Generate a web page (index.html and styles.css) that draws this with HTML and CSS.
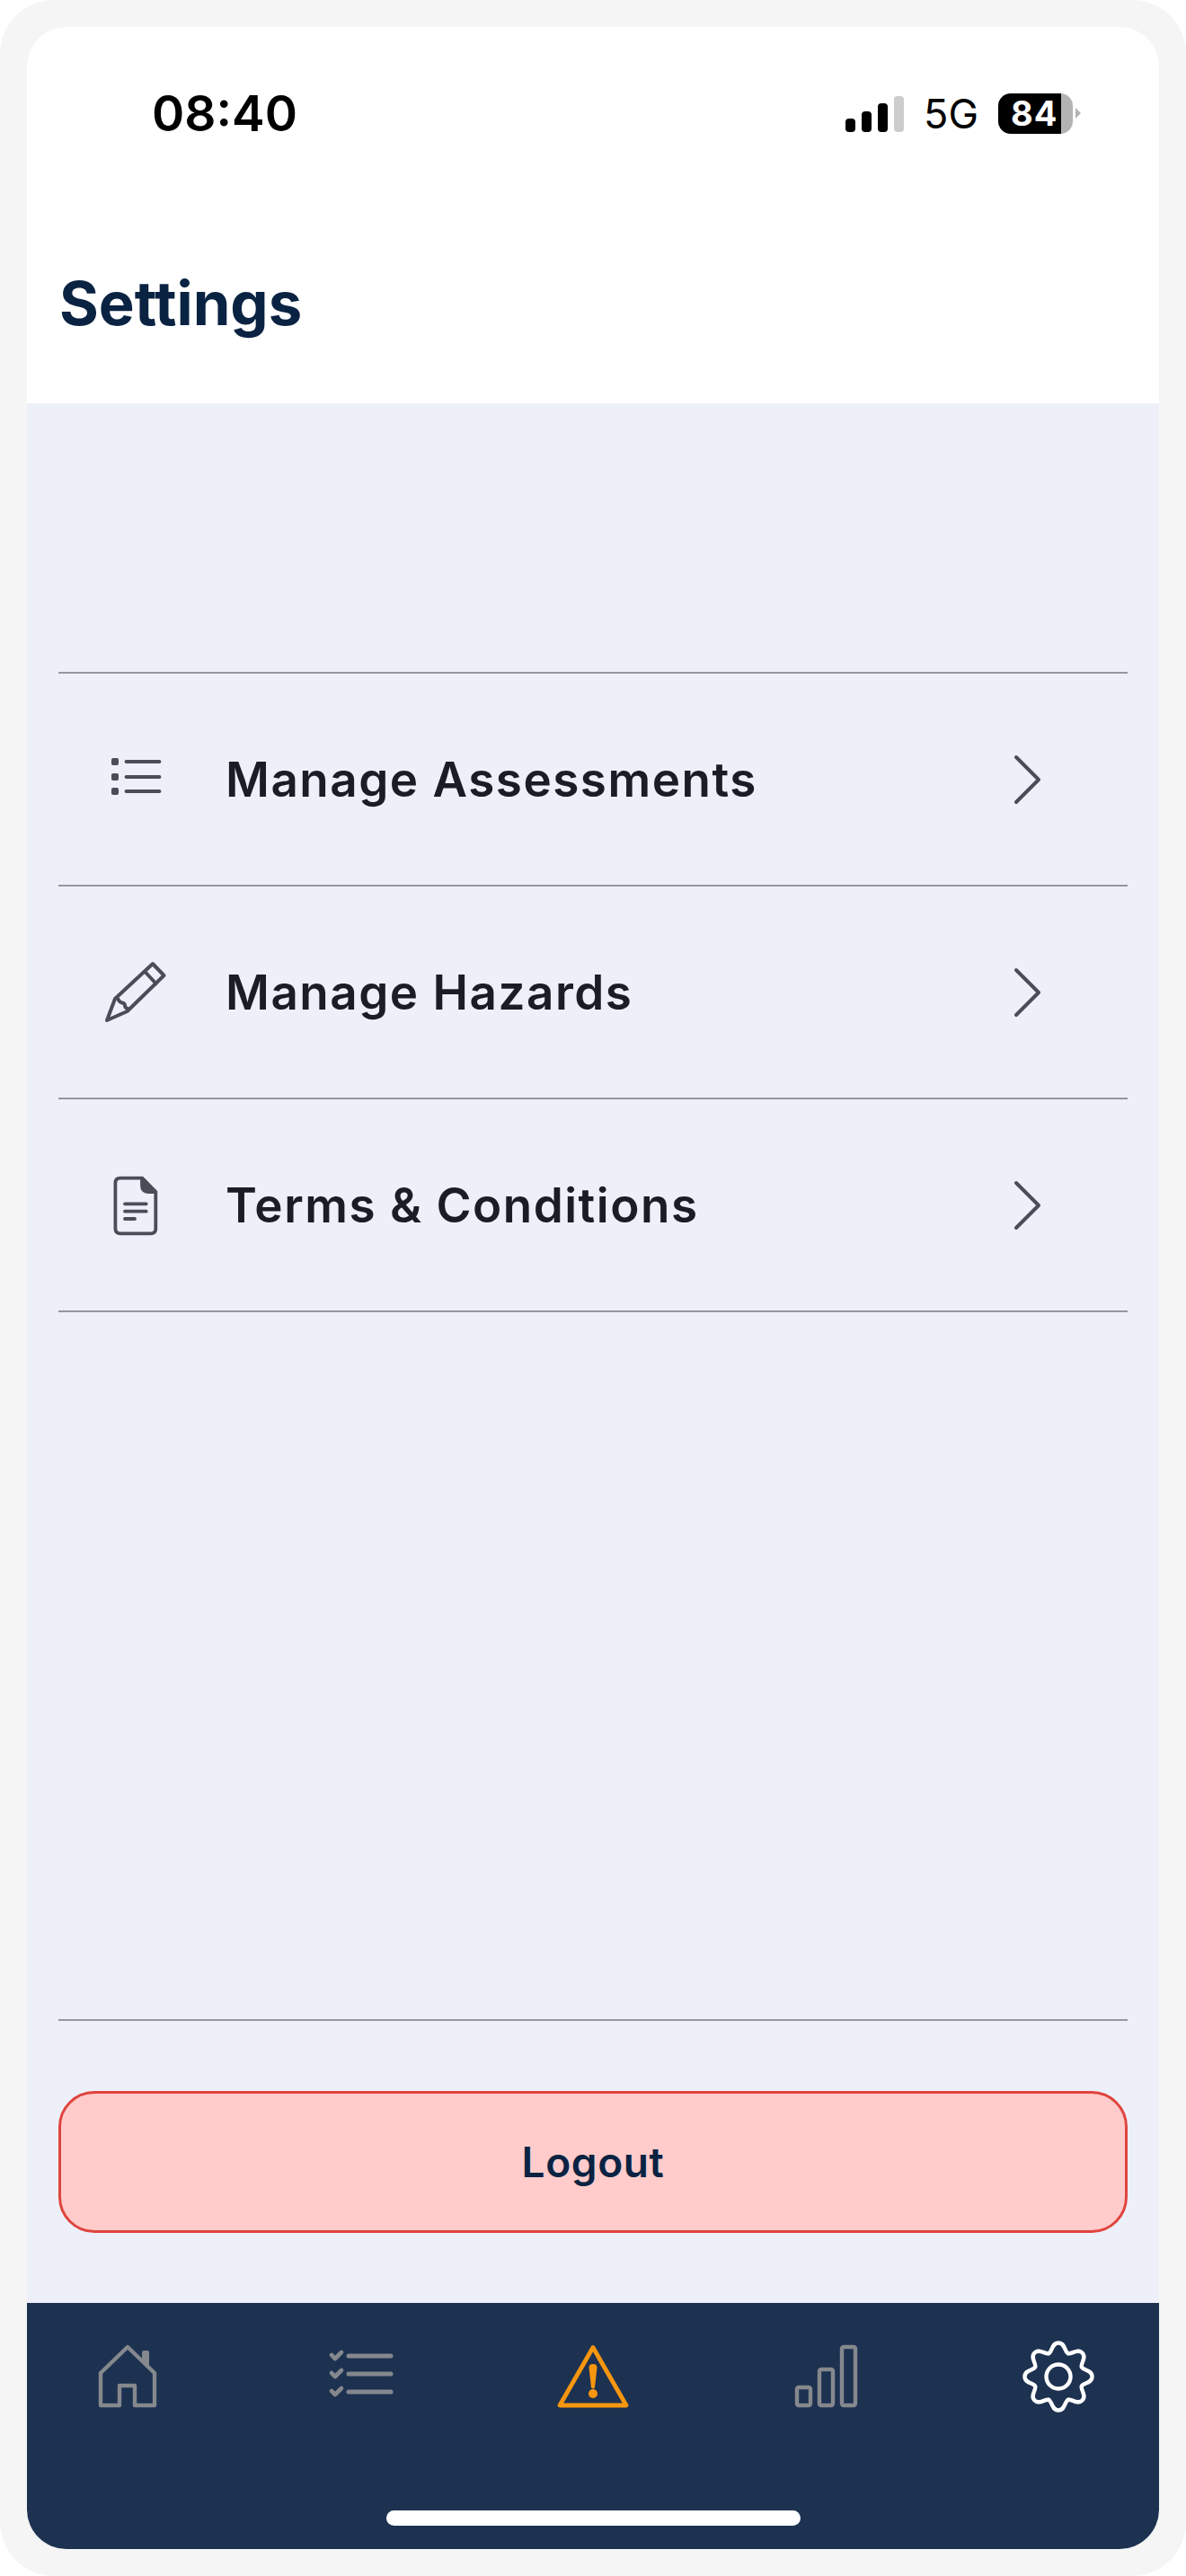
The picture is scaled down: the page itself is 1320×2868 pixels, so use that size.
FILE: index.html
```html
<!DOCTYPE html>
<html lang="en">
<head>
    <meta charset="UTF-8">
    <meta name="viewport" content="width=device-width, initial-scale=1.0">
    <title>Settings</title>
    <link rel="stylesheet" href="styles.css">
</head>
<body>
    <div class="frame">
    <div class="screen">

        <!-- Status bar and title -->
        <header class="top">
            <div class="status-bar">
                <span class="time">08:40</span>
                <div class="status-right">
                    <div class="signal">
                        <span class="bar bar-1"></span>
                        <span class="bar bar-2"></span>
                        <span class="bar bar-3"></span>
                        <span class="bar bar-4"></span>
                    </div>
                    <span class="network">5G</span>
                    <div class="battery"><span class="battery-level">84</span></div>
                    <span class="battery-nub"></span>
                </div>
            </div>
            <h1>Settings</h1>
        </header>

        <main class="content">
            <div class="menu">
                <a class="menu-row">
                    <svg class="row-icon" viewBox="0 0 80 80">
                        <rect x="12" y="16" width="8" height="8" rx="2" fill="#4a4d57"/>
                        <rect x="12" y="33" width="8" height="8" rx="2" fill="#4a4d57"/>
                        <rect x="12" y="49" width="8" height="8" rx="2" fill="#4a4d57"/>
                        <path d="M28.5 20H65.5M28.5 37H65.5M28.5 53H65.5" stroke="#4a4d57" stroke-width="3.8" stroke-linecap="round"/>
                    </svg>
                    <span class="row-label">Manage Assessments</span>
                    <svg class="chevron" viewBox="0 0 40 60"><path d="M9 5L34 30L9 55" fill="none" stroke="#4a4d57" stroke-width="4" stroke-linecap="round" stroke-linejoin="round"/></svg>
                </a>
                <a class="menu-row">
                    <svg class="row-icon" viewBox="0 0 80 80" fill="none" stroke="#4a4d57" stroke-width="4" stroke-linejoin="round" stroke-linecap="round">
                        <path d="M7 71L16 47L58 8L70.5 21L29.5 61Z"/>
                        <path d="M49.5 17L61.5 30"/>
                        <path d="M19.5 47.5Q21 51 24 51.5T27 54.5T30 58"/>
                    </svg>
                    <span class="row-label">Manage Hazards</span>
                    <svg class="chevron" viewBox="0 0 40 60"><path d="M9 5L34 30L9 55" fill="none" stroke="#4a4d57" stroke-width="4" stroke-linecap="round" stroke-linejoin="round"/></svg>
                </a>
                <a class="menu-row">
                    <svg class="row-icon" viewBox="0 0 80 80" fill="none" stroke="#4a4d57" stroke-width="3.8" stroke-linejoin="round" stroke-linecap="round">
                        <path d="M22 9.7H46L61.3 25V66Q61.3 71.3 56 71.3H22Q16.4 71.3 16.4 66V15Q16.4 9.7 22 9.7Z"/>
                        <path d="M46 9.7V18Q46 25 53 25H61.3Z" fill="#4a4d57"/>
                        <path d="M27 38.3H50.7M27 46.7H50.7M27 55H38"/>
                    </svg>
                    <span class="row-label">Terms &amp; Conditions</span>
                    <svg class="chevron" viewBox="0 0 40 60"><path d="M9 5L34 30L9 55" fill="none" stroke="#4a4d57" stroke-width="4" stroke-linecap="round" stroke-linejoin="round"/></svg>
                </a>
            </div>

            <div class="logout-area">
                <button class="logout-btn">Logout</button>
            </div>
        </main>

        <!-- Bottom tabs -->
        <footer class="tabbar">
            <nav class="tabs">
                <svg class="tab-icon" viewBox="0 0 80 80" fill="none" stroke="#85888d" stroke-width="4.4" stroke-linejoin="round">
                    <path d="M10 72V36L40 7L70 36V72H48V50H31V72Z"/>
                    <path d="M56 13Q56 11 58 11H62Q64 11 64 13V30L56 22Z" fill="#85888d" stroke="none"/>
                </svg>
                <svg class="tab-icon" viewBox="0 0 80 80" fill="none" stroke="#85888d" stroke-linecap="round" stroke-linejoin="round">
                    <path d="M27 17H74M27 37H74M27 57H74" stroke-width="5"/>
                    <path d="M8 16L12 20L19 13M8 36L12 40L19 33M8 56L12 60L19 53" stroke-width="4.6"/>
                </svg>
                <svg class="tab-icon" viewBox="0 0 80 80" fill="none">
                    <path d="M40 7.5L77 72H3Z" stroke="#f7960f" stroke-width="4.8" stroke-linejoin="round"/>
                    <path d="M35.5 30Q35.5 26 40 26T44.5 30L42 52Q40 55 38 52Z" fill="#f7960f"/>
                    <circle cx="40" cy="59" r="5" fill="#f7960f"/>
                </svg>
                <svg class="tab-icon" viewBox="0 0 80 80" fill="none" stroke="#85888d" stroke-width="4.4">
                    <rect x="8" y="52" width="15" height="20" rx="2"/>
                    <rect x="33" y="32" width="15" height="40" rx="2"/>
                    <rect x="58" y="7" width="15" height="65" rx="2"/>
                </svg>
                <svg class="tab-icon" viewBox="-40 -40 80 80" fill="none" stroke="#fff" stroke-width="4.4" stroke-linecap="round">
                    <g id="tooth"><path d="M-10.7 -25.9C-7 -27.5 -7.5 -37.5 0 -37.5S7 -27.5 10.7 -25.9"/></g>
                    <use href="#tooth" transform="rotate(45)"/>
                    <use href="#tooth" transform="rotate(90)"/>
                    <use href="#tooth" transform="rotate(135)"/>
                    <use href="#tooth" transform="rotate(180)"/>
                    <use href="#tooth" transform="rotate(225)"/>
                    <use href="#tooth" transform="rotate(270)"/>
                    <use href="#tooth" transform="rotate(315)"/>
                    <circle r="13.5"/>
                </svg>
            </nav>
            <div class="home-indicator"></div>
        </footer>
    </div>
    </div>
</body>
</html>
```

FILE: styles.css
```css
* {
    box-sizing: border-box;
}
body {
    margin: 0;
    background-color: white;
    font-family: Inter, "Noto Sans", sans-serif;
}
.frame {
    height: 2868px;
    padding: 30px;
    border-radius: 60px;
    background-color: #f5f5f5;
}
.screen {
    height: 2808px;
    display: flex;
    flex-direction: column;
    border-radius: 44px;
    overflow: hidden;
    background-color: #edf0f9;
}

/* top */
.top {
    height: 419px;
    background-color: white;
    padding: 0 36px;
}
.status-bar {
    height: 161px;
    padding: 31px 0 0 103px;
    display: flex;
    align-items: center;
    justify-content: space-between;
}
.time {
    font-size: 55px;
    font-weight: 600;
    color: black;
}
.status-right {
    display: flex;
    align-items: center;
    margin-right: 51px;
}
.signal {
    display: flex;
    align-items: flex-end;
    gap: 7px;
    height: 41px;
    margin-right: 22px;
}
.bar {
    width: 11px;
    border-radius: 4px;
    background-color: black;
}
.bar-1 { height: 15px; }
.bar-2 { height: 23px; }
.bar-3 { height: 32px; }
.bar-4 { height: 40px; background-color: #cccccc; }
.network {
    font-size: 45px;
    font-weight: 400;
    color: black;
    margin-right: 22px;
}
.battery {
    width: 83px;
    height: 45px;
    border-radius: 14px;
    overflow: hidden;
    background: linear-gradient(to right, black 84%, #b3b3b3 84%);
    color: white;
    font-size: 38px;
    font-weight: 700;
    letter-spacing: 1px;
    line-height: 45px;
    padding-left: 14px;
}
.battery-nub {
    width: 0;
    height: 0;
    margin-left: 3px;
    border-left: 6px solid #b3b3b3;
    border-top: 6px solid transparent;
    border-bottom: 6px solid transparent;
}
h1 {
    margin: 106px 0 0;
    font-size: 67px;
    font-weight: 700;
    line-height: 82px;
    color: #0a2342;
}

/* list */
.content {
    flex: 1;
    display: flex;
    flex-direction: column;
    justify-content: space-between;
    padding: 299px 35px 0;
}
.menu {
    border-top: 2px solid #94979e;
}
.menu-row {
    height: 237px;
    display: flex;
    align-items: center;
    padding-left: 47px;
    border-bottom: 2px solid #94979e;
}
.row-icon {
    width: 80px;
    height: 80px;
    flex-shrink: 0;
}
.row-label {
    flex: 1;
    margin-left: 59px;
    font-size: 53px;
    font-weight: 600;
    letter-spacing: 1.5px;
    color: #1b1d24;
}
.chevron {
    width: 40px;
    height: 60px;
    margin-right: 93px;
}

.logout-area {
    border-top: 2px solid #94979e;
    padding: 78px 0 78px;
}
.logout-btn {
    display: block;
    width: 100%;
    height: 158px;
    background-color: #ffcccb;
    border: 3px solid #e0443e;
    border-radius: 40px;
    font-family: Inter, "Noto Sans", sans-serif;
    font-size: 46px;
    font-weight: 600;
    letter-spacing: 0.6px;
    color: #0a2342;
}

/* tabs */
.tabbar {
    height: 274px;
    background-color: #1d3250;
    padding-top: 42px;
    display: flex;
    flex-direction: column;
    align-items: center;
}
.tabs {
    width: 100%;
    display: flex;
    justify-content: space-between;
    padding: 0 72px;
}
.tab-icon {
    width: 80px;
    height: 80px;
}
.home-indicator {
    width: 461px;
    height: 17px;
    margin-top: 109px;
    border-radius: 9px;
    background-color: white;
}
```
